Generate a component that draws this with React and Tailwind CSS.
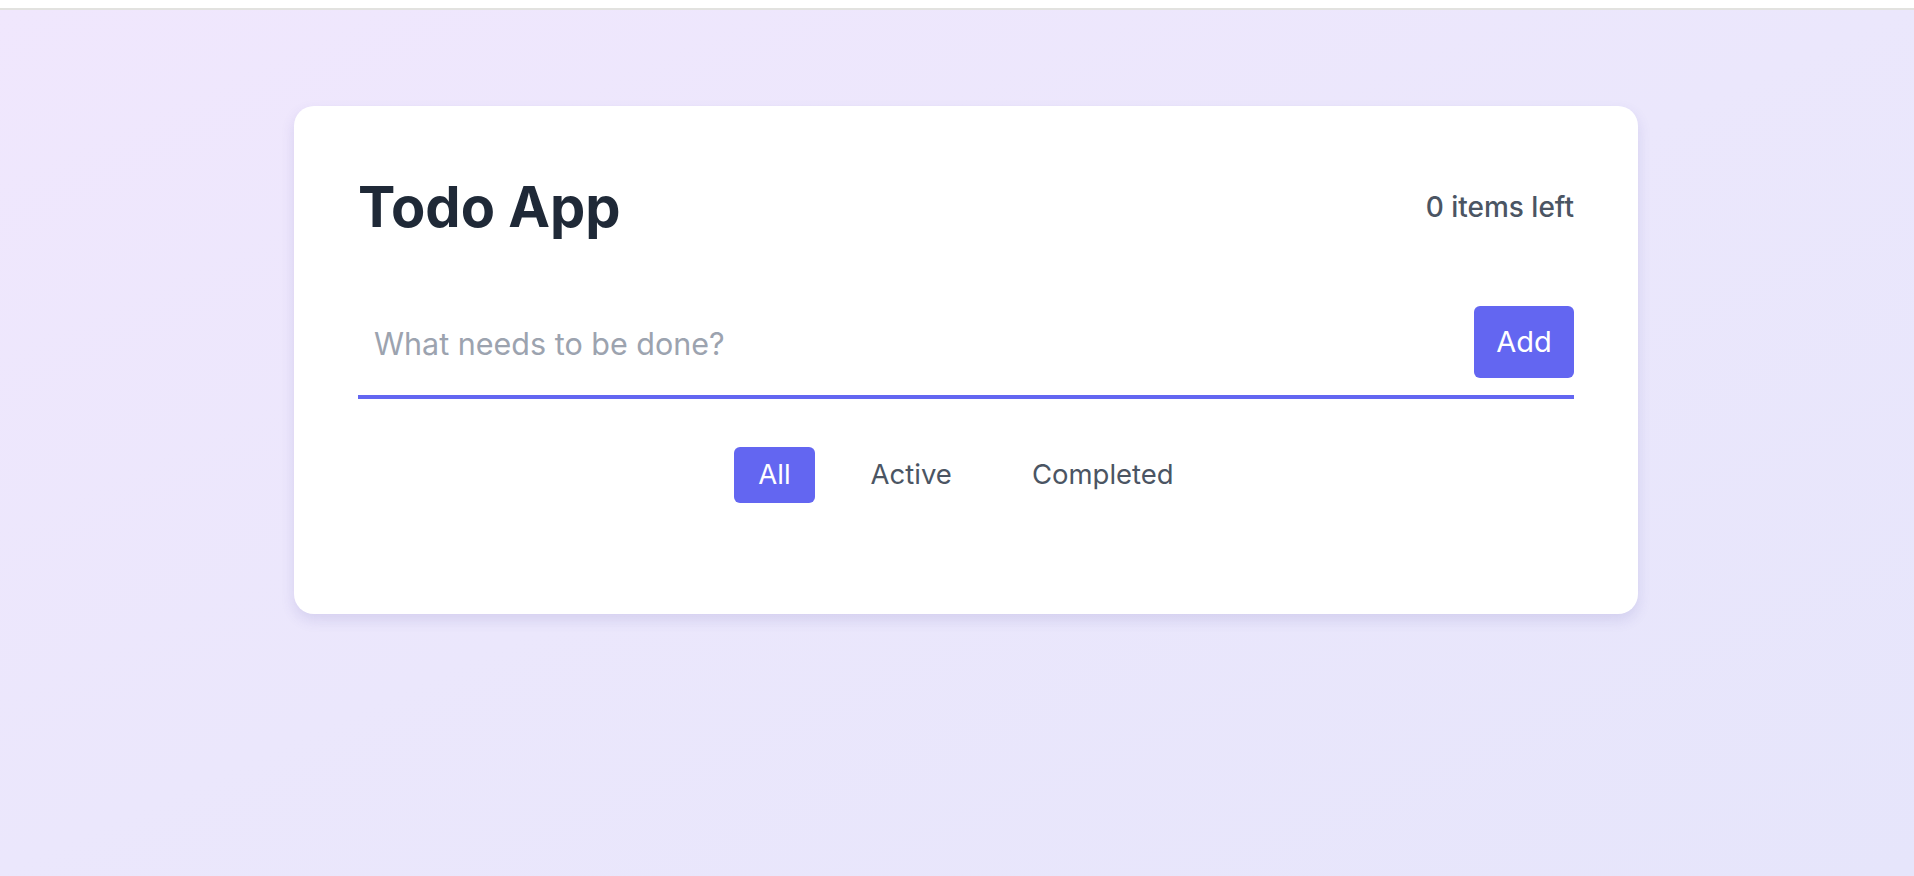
import React, { useState } from 'react';

const FILTERS = ['All', 'Active', 'Completed'];

export default function App() {
  const [filter, setFilter] = useState('All');
  const [text, setText] = useState('');

  return (
    <div className="min-h-screen font-['Inter','Noto_Sans',sans-serif]">
      {/* thin top strip */}
      <div className="h-[10px] bg-white border-b-2 border-[#e2e2df]" />

      <div className="min-h-[866px] bg-gradient-to-br from-[#f0e7fd] via-[#ebe7fc] to-[#e6e5fb] pt-[96px]">
        {/* ── Card ── */}
        <div className="ml-[294px] w-[1344px] bg-white rounded-[20px] shadow-[0_6px_14px_rgba(80,70,160,0.14)] px-16 pt-16 pb-[111px]">
          <div className="flex items-center justify-between h-[73px]">
            <h1 className="text-[56px] font-bold text-[#1f2937] leading-none">Todo App</h1>
            <span className="text-[28px] font-medium text-[#4b5563]">0 items left</span>
          </div>

          <div className="mt-[47px] flex items-center border-b-4 border-[#6366f1] pt-4 pb-[17px]">
            <input
              value={text}
              onChange={(e) => setText(e.target.value)}
              placeholder="What needs to be done?"
              className="flex-1 px-4 pt-[4px] text-[30.5px] text-[#1f2937] placeholder:text-[#9ca3af] outline-none bg-transparent"
            />
            <button className="w-[100px] h-[72px] rounded-md bg-[#6366f1] text-white text-[29px]">
              Add
            </button>
          </div>

          <div className="mt-12 flex justify-center gap-8">
            {FILTERS.map((f) => (
              <button
                key={f}
                onClick={() => setFilter(f)}
                className={
                  f === filter
                    ? 'h-14 px-6 rounded-md bg-[#6366f1] text-white text-[27.5px]'
                    : 'h-14 px-6 rounded-md text-[#4b5563] text-[27.5px]'
                }
              >
                {f}
              </button>
            ))}
          </div>
        </div>
      </div>
    </div>
  );
}
